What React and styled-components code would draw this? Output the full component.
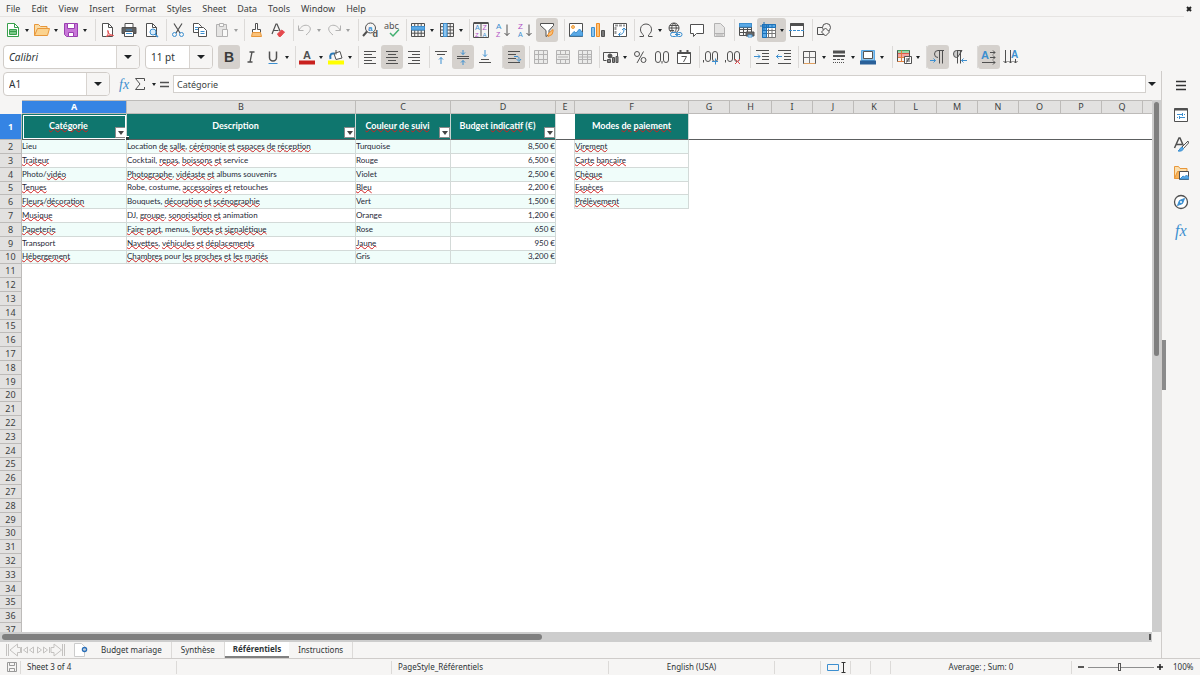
import React from "react";
import styled, { createGlobalStyle, css } from "styled-components";

const Global = createGlobalStyle`
  * { box-sizing: border-box; }
  html, body, #root { height: 100%; }
  body {
    margin: 0;
    background: #f6f5f4;
    color: #3c3f41;
    font: 9px/14px "Noto Sans", sans-serif;
  }
  button, input { font: inherit; color: inherit; padding: 0; margin: 0; border: 0; background: none; }
  svg { display: block; flex: none; overflow: visible; }
`;

const DARK = "#505050";
const BLUE = "#3c8fd0";
const LINE = "#dcdad8";

/* ---------- layout ---------- */

const Window = styled.div`
  height: 100vh;
  display: flex;
  flex-direction: column;
  overflow: hidden;
`;

const MenuBar = styled.header`
  display: flex;
  align-items: center;
  height: 17px;
  flex: none;
  padding-right: 6px;
`;

const Menus = styled.nav`
  flex: 1;
  display: flex;
  gap: 11px;
  height: 17px;
  padding-left: 6px;
  border-bottom: 1px solid #e6e4e2;
`;

const MenuButton = styled.button`
  height: 17px;
`;

const CloseButton = styled.button`
  width: 10px;
`;

const ToolBar = styled.div`
  display: flex;
  align-items: center;
  flex: none;
  height: ${(p) => p.$h}px;
  padding-left: ${(p) => p.$start}px;
`;

const ToolButton = styled.button`
  flex: none;
  display: flex;
  align-items: center;
  width: ${(p) => (p.$drop ? 29 : 22)}px;
  height: 24px;
  padding-left: 3px;
  border-radius: 3px;
  opacity: ${(p) => (p.$dim ? 0.4 : 1)};
  background: ${(p) => (p.$on ? "#d5d1cd" : "transparent")};
`;

const Separator = styled.span`
  flex: none;
  width: ${(p) => p.$w}px;
  height: 22px;
  border-right: 1px solid ${LINE};
`;

const Caret = styled.span`
  flex: none;
  width: 0;
  height: 0;
  border: 0 solid transparent;
  border-width: ${(p) => (p.$big ? "4px 4px 0" : "3px 2px 0")};
  border-top-color: #1e2224;
  margin-left: ${(p) => (p.$big ? 0 : 4)}px;
`;

const Combo = styled.div`
  flex: none;
  display: flex;
  width: ${(p) => p.$w}px;
  height: 24px;
  margin-right: 5px;
  border: 1px solid #d0ccc8;
  border-radius: 4px;
  background: #fff;
  overflow: hidden;
`;

const ComboInput = styled.input`
  flex: 1;
  min-width: 0;
  padding-left: 5px;
  font-size: 10px;
  font-style: ${(p) => (p.$italic ? "italic" : "normal")};
  color: #2e3436;
`;

const ComboButton = styled.button`
  width: 23px;
  display: flex;
  align-items: center;
  justify-content: center;
  border-left: 1px solid #d8d4d0;
  background: #f6f5f4;
`;

const Work = styled.div`
  flex: 1;
  min-height: 0;
  display: flex;
`;

const Main = styled.main`
  flex: 1;
  min-width: 0;
  display: flex;
  flex-direction: column;
`;

const FormulaBar = styled.div`
  flex: none;
  display: flex;
  align-items: center;
  height: 29px;
  padding: 0 3px 3px 3px;
`;

const FormulaTools = styled.div`
  display: flex;
  align-items: center;
  width: 58px;
  padding-left: 1px;
`;

const FormulaInput = styled.input`
  flex: 1;
  min-width: 0;
  height: 18px;
  padding-left: 3px;
  border: 1px solid #d3d0cd;
  background: #fff;
`;

const ExpandButton = styled.button`
  display: flex;
  justify-content: center;
  width: 12px;
`;

const SheetArea = styled.div`
  flex: 1;
  min-height: 0;
  display: flex;
`;

const SheetView = styled.div`
  flex: 1;
  min-width: 0;
  overflow: hidden;
  background: #fff;
`;

const VScroll = styled.div`
  flex: none;
  width: 9px;
  padding: 2px 2px 0 2px;
  background: #cdcdcd;
`;

const VThumb = styled.div`
  height: 48%;
  border-radius: 3px;
  background: #7f7f7f;
`;

const HScroll = styled.div`
  flex: none;
  display: flex;
  justify-content: space-between;
  height: 10px;
  margin-right: 9px;
  padding: 2px 1px 2px 2px;
  background: #cdcdcd;
`;

const HThumb = styled.div`
  width: 47%;
  border-radius: 3px;
  background: #7f7f7f;
`;

const HGrip = styled.div`
  width: 2px;
  background: #555;
`;

/* ---------- spreadsheet ---------- */

const Sheet = styled.table`
  table-layout: fixed;
  width: 1px;
  border-collapse: separate;
  border-spacing: 0;

  tbody tr { height: 14px; }
  tbody tr:nth-child(5n + 4) { height: 13px; }
`;

const headCell = css`
  padding: 0;
  border: 0 solid #bdbbb9;
  border-width: 0 1px 1px 0;
  font-weight: ${(p) => (p.$on ? 700 : 400)};
  color: ${(p) => (p.$on ? "#fff" : "#3c3f41")};
  background: ${(p) => (p.$on ? "#3584e4" : "#e2e1e0")};
`;

const Corner = styled.td`
  padding: 0;
  background: #f6f5f4;
`;

const ColHead = styled.th`
  ${headCell}
  height: 14px;
  border-top-width: 1px;
  font-size: 9px;
  line-height: 12px;
`;

const RowHead = styled.th`
  ${headCell}
  font-size: 9px;
  line-height: 12px;
`;

const TitleCell = styled.td`
  position: relative;
  height: 26px;
  padding: 0;
  font: 700 9px/23px Lato, sans-serif;
  text-align: center;
  color: #fff;
  background: ${(p) => (p.$filled ? "#0f766e" : "#fff")};
  border-right: ${(p) => (p.$filled ? "1px solid #c9d6d3" : "0")};
  border-bottom: 1px solid #5c5f60;
  outline: ${(p) => (p.$on ? "1px solid #fff" : "0")};
  outline-offset: -2px;
`;

const FillHandle = styled.span`
  position: absolute;
  z-index: 1;
  right: -3px;
  bottom: -1px;
  width: 4px;
  height: 4px;
  border: 1px solid #fff;
  border-width: 1px 0 0 1px;
  background: #2f3b3a;
`;

const Title = styled.div`
  display: flex;
  align-items: flex-start;
  height: 25px;
`;

const TitleText = styled.span`
  flex: 1;
  white-space: nowrap;
`;

const FilterButton = styled.button`
  align-self: flex-end;
  display: flex;
  align-items: center;
  justify-content: center;
  width: 11px;
  height: 11px;
  margin-bottom: 1px;
  border: 1px solid #8a8a8a;
  background: #fff;
`;

const FilterMark = styled.span`
  border: 3px solid transparent;
  border-top: 4px solid #444;
  border-bottom: 0;
`;

const Cell = styled.td`
  padding: 0 0 1px;
  overflow: hidden;
  white-space: nowrap;
  font: 8px/11px Lato, sans-serif;
  color: #1f2937;
  text-align: ${(p) => (p.$right ? "right" : "left")};
  background: ${(p) => (p.$tint ? "#f0fdfa" : "#fff")};
  border: 0 solid #d3dad8;
  border-width: ${(p) => (p.$boxed ? "0 1px 1px 0" : "0")};
  border-right: ${(p) => (p.$edge ? "1px solid #d3dad8" : "")};
`;

const Misspelt = styled.span`
  text-decoration: underline wavy #d02020 1px;
  text-decoration-skip-ink: none;
  text-underline-offset: -1px;
`;

/* ---------- sidebar, tabs, status ---------- */

const Splitter = styled.div`
  flex: none;
  display: flex;
  align-items: center;
  width: 5px;
  border-left: 1px solid #cfccca;
`;

const Grip = styled.div`
  width: 4px;
  height: 50px;
  background: #8b8b8b;
`;

const SideBar = styled.aside`
  flex: none;
  display: flex;
  flex-direction: column;
  align-items: center;
  width: 34px;
  padding: 6px 4px 0 0;
`;

const SideButton = styled.button`
  height: 17px;
  margin-bottom: 12px;
`;

const TabBar = styled.div`
  flex: none;
  display: flex;
  height: 16px;
  font-size: 8px;
`;

const TabNav = styled.div`
  display: flex;
  align-items: center;
  width: 70px;
  padding-left: 5px;
`;

const AddTab = styled.button`
  width: 22px;
  padding-left: 4px;
`;

const Tab = styled.button`
  padding: 0 9px;
  line-height: 14px;
  height: 16px;
  color: #2e3436;
  border-right: 1px solid ${LINE};
  ${(p) =>
    p.$on &&
    css`
      padding: 0 8px;
      font-weight: 700;
      background: #fff;
      border-right: 0;
      border-bottom: 2px solid #808080;
    `}
`;

const StatusBar = styled.footer`
  flex: none;
  display: grid;
  grid-template-columns: 21px 156fr 215fr 217fr 166fr 46px 30px 20px 20px 181fr 96px 32px;
  align-items: center;
  height: 17px;
  border-top: 1px solid #cfccca;
  font-size: 8px;
  color: #2e3436;
`;

const StatusCell = styled.div`
  display: flex;
  align-items: center;
  justify-content: ${(p) => (p.$center ? "center" : "flex-start")};
  height: 13px;
  padding: 0 6px;
  white-space: nowrap;
  border-right: 1px solid ${LINE};
`;

const ZoomCell = styled.div`
  display: flex;
  align-items: center;
  justify-content: space-between;
  padding: 0 4px 0 5px;
`;

const ZoomButton = styled.button`
  width: 8px;
  height: 12px;
`;

const ZoomSlider = styled.input`
  appearance: none;
  width: 66px;
  height: 1px;
  background: #8f8f8f;

  &::-webkit-slider-thumb {
    appearance: none;
    width: 3px;
    height: 8px;
    border: 1px solid #555;
    background: #f6f5f4;
  }
`;

const Percent = styled.span`
  padding-left: 5px;
`;

/* ---------- icons ---------- */

const Svg = ({ w = 16, h = 16, children }) => (
  <svg width={w} height={h} viewBox={`0 0 ${w} ${h}`} fill="none" stroke={DARK} strokeWidth="1" aria-hidden="true">
    {children}
  </svg>
);

const Glyph = ({ x, y, size = 9, fill = DARK, children, ...rest }) => (
  <text x={x} y={y} fontSize={size} fill={fill} stroke="none" fontFamily="Liberation Sans, sans-serif" {...rest}>
    {children}
  </text>
);

const page = "M3.5 1.5h6l4 4v9h-10z";
const gridLines = "M1.5 1.5h13v13h-13zM1.5 4.7h13M1.5 8h13M1.5 11.2h13M4.7 1.5v13M8 1.5v13M11.2 1.5v13";
const VIOLET = "#b04fc4";

const Merge = ({ extra }) => (
  <>
    <path d="M1.5 1.500h13v13h-13z" fill="#ddd" />
    <path d="M1.5 5.5h13M1.5 10.500h13M5.5 1.500v4M10.5 1.500v4M5.5 10.5v4M10.5 10.5v4" />
    <path d={extra} />
  </>
);

const icons = {
  newDoc: (
    <>
      <path d="M2.5 1.5h7l4 4v9h-11z" fill="#fff" stroke="#38a04c" />
      <path d="M9.5 1.5v4h4" stroke="#38a04c" />
      <path d="M4.500 7.500h7v5h-7z" stroke="#38a04c" fill="#7cc98a" />
      <path d="M4.500 9.500h7" stroke="#38a04c" />
    </>
  ),
  open: (
    <>
      <path d="M.500 13.500v-11h4l2 2h6.500v2.500" fill="#f9dca6" stroke="#e8973a" />
      <path d="M.500 13.500l3-7h12l-2 7z" fill="#fbd38f" stroke="#e8973a" />
    </>
  ),
  save: (
    <>
      <path d="M1.5 1.5h13v13h-11l-2-2z" fill="#c877d8" stroke="#9a3fb0" />
      <path d="M4.5 1.5h7v5h-7z" fill="#fff" stroke="#9a3fb0" />
      <path d="M5.5 10.5h5v4h-5z" fill="#fff" stroke="#9a3fb0" />
    </>
  ),
  pdf: (
    <>
      <path d={page} fill="#fff" />
      <path d="M9.5 1.5v4h4" />
      <path d="M7.500 14.500c2-2 2.500-5.500 1.500-6s-.5 4.500 5.500 5c-2-1-5 0-7 1" stroke="#e0484a" />
    </>
  ),
  print: (
    <>
      <path d="M4 1.500h8v4h-8z" fill="#fff" />
      <path d="M1 5.500h14v6H1z" fill="#606060" />
      <path d="M3.500 9.500h9v5h-9z" fill="#fff" />
      <path d="M5 11.500h6M5 8h6" stroke={BLUE} />
    </>
  ),
  preview: (
    <>
      <path d={page} fill="#fff" />
      <path d="M9.500 1.500v4h4" />
      <circle cx="10" cy="10" r="3" fill="#d9ecfa" stroke={BLUE} />
      <path d="M12 12l3 3" stroke={BLUE} strokeWidth="1.500" />
    </>
  ),
  cut: (
    <>
      <path d="M4 1.500l6 9.500M12 1.500L6 11" strokeWidth="1.200" />
      <circle cx="4.500" cy="12.500" r="2" stroke={BLUE} />
      <circle cx="11.500" cy="12.500" r="2" stroke={BLUE} />
    </>
  ),
  copy: (
    <>
      <path d="M1.500 1.500h5l3 3v6h-8z" fill="#fff" />
      <path d="M6.500 5.500h5l3 3v6h-8z" fill="#fff" />
      <path d="M3 5.500h3M3 7.500h3M8.500 9.500h4M8.500 11.500h4" stroke={BLUE} />
    </>
  ),
  paste: (
    <>
      <path d="M2.500 2.500h10v12h-10z" fill="#ccc" />
      <path d="M5.500 1.500h4v3h-4z" fill="#fff" />
      <path d="M8.500 7.500h5v7h-5z" fill="#fff" />
    </>
  ),
  clone: (
    <>
      <path d="M7.500 1.500h2v6h3v3h-8v-3h3z" fill="#fff" />
      <path d="M4.500 10.500h8l1 4h-10z" fill="#fbc27a" stroke="#e8973a" />
    </>
  ),
  clear: (
    <>
      <path d="M2 12l4-10h1l3 7M3.500 8.500h5" strokeWidth="1.200" />
      <path d="M7.500 12l4-4 3 2-4 4.500h-1.500z" fill="#e5494d" stroke="#e5494d" />
    </>
  ),
  undo: <path d="M1.500 3.500v5h5M2 8c2-3.500 5-5.500 8.500-4.500s4.500 5-1.500 9.500" />,
  redo: <path d="M14.500 3.500v5h-5M14 8c-2-3.500-5-5.500-8.500-4.500s-4.500 5 1.500 9.500" />,
  find: (
    <>
      <circle cx="8.500" cy="6" r="5" />
      <path d="M5 9.500L1 14" strokeWidth="2" />
      <Glyph x="6" y="8.500" size="8" fontWeight="700" fill={BLUE}>a</Glyph>
      <Glyph x="10.500" y="15" size="9" fontWeight="700">d</Glyph>
    </>
  ),
  spell: (
    <>
      <Glyph x="0" y="7" size="9" style={{ fontFamily: "Noto Sans, sans-serif" }}>abc</Glyph>
      <path d="M6 11l3 3 6-6.500" stroke="#43b071" strokeWidth="1.500" />
    </>
  ),
  row: (
    <>
      <path d={gridLines} />
      <path d="M1.500 4.500h13v3.500h-13z" fill="#5aa9e6" stroke={BLUE} />
    </>
  ),
  col: (
    <>
      <path d={gridLines} />
      <path d="M4.500 1.500h3.500v13h-3.500z" fill="#8cc4ee" stroke={BLUE} />
    </>
  ),
  sort: (
    <>
      <path d="M.500 1.500h15v14h-15zM8 1.500v13" />
      <path d="M.500 1h15" strokeWidth="2" />
      <Glyph x="2" y="8" size="7" fill={BLUE}>A</Glyph>
      <Glyph x="2" y="15" size="6" fill={VIOLET}>Z</Glyph>
      <Glyph x="9.500" y="8" size="7" fill={VIOLET}>Z</Glyph>
      <Glyph x="9.500" y="15" size="6" fill={BLUE}>A</Glyph>
    </>
  ),
  asc: (
    <>
      <Glyph x="1" y="6.500" size="8" fill={BLUE}>A</Glyph>
      <Glyph x="1" y="15" size="7" fill={VIOLET}>Z</Glyph>
      <path d="M12 2.500v11M9.500 11l2.500 2.500 2.500-2.500" />
    </>
  ),
  desc: (
    <>
      <Glyph x="1" y="6.500" size="8" fill={VIOLET}>Z</Glyph>
      <Glyph x="1" y="15" size="7" fill={BLUE}>A</Glyph>
      <path d="M12 2.500v11M9.500 11l2.500 2.500 2.500-2.500" />
    </>
  ),
  filter: (
    <>
      <path d="M1.500 1.500h13v2l-4.500 5v4l-3 2v-6l-5.500-5z" fill="#fff" />
      <path d="M14 7.500l-5 4.500v2.500l4-2 1-3z" fill="#fbc27a" stroke="#f08c24" />
    </>
  ),
  image: (
    <>
      <path d="M1.500 1.500h13v13h-13z" fill="#fff" />
      <circle cx="5" cy="5" r="1.500" fill="#fbc27a" stroke="#f0a040" />
      <path d="M2 14l4-4.500 2 1.500 3.500-4 3 3.500v3.500z" fill="#5aa9e6" stroke={BLUE} />
    </>
  ),
  chart: (
    <>
      <path d="M1.500 5.500h3v9h-3z" fill="#8cc4ee" stroke={BLUE} />
      <path d="M6.500 1.500h3v13h-3z" fill="#fbc27a" stroke="#f08c24" />
      <path d="M11.500 8.500h3v6h-3z" fill="#777" />
    </>
  ),
  pivot: (
    <>
      <path d="M1.500 1.500h13v13h-13z" fill="#fff" />
      <path d="M3 3.500h10M3.500 5v8" stroke="#999" strokeWidth="2" strokeDasharray="3 1" />
      <path d="M7 12.500c4 0 5-2 5-6M10 8l2-2 2 2M8.500 10.500l-2 2 2 2" stroke={BLUE} />
    </>
  ),
  omega: <path d="M1.500 14.500h4v-1.500c-5-3.500-3.500-11 2.500-11s7.500 7.500 2.500 11v1.500h4" />,
  link: (
    <>
      <circle cx="7" cy="6" r="5" />
      <path d="M2 6h10M7 1c-3 3-3 7 0 10M7 1c3 3 3 7 0 10M3 3.500h8M3 8.500h4" />
      <path d="M4.500 10.500h4a2 2 0 0 1 0 4h-3a2 2 0 0 1 0-4M11.500 14.500a2 2 0 0 1 0-4h1.500a2 2 0 0 1 0 4zM8 12.500h5" stroke={BLUE} fill="#f6f5f4" />
    </>
  ),
  comment: <path d="M1.500 2.500h13v9h-7l-3 3v-3h-3z" fill="#fff" />,
  header: <path d="M3.500 1.500h6l4 4v9h-10zM4 11.500h9M5 13h7" fill="#ccc" />,
  printRange: (
    <>
      <path d="M1.500 1.500h12v12h-12zM1.500 5.500h12M1.500 7.500h12M1.500 10.500h12M5.500 1.500v12M9.500 1.500v12" />
      <path d="M1.500 1.500h12v3.500h-12z" fill="#5aa9e6" stroke={BLUE} />
      <path d="M8 10h8v4h-8z" fill="#666" />
      <path d="M10 13h4v2h-4z" fill="#fff" stroke={BLUE} />
    </>
  ),
  freeze: (
    <>
      <path d="M2.500 2.500h13v13h-13z" fill="#fff" stroke="#777" />
      <path d="M6.500 8.500h9M6.500 11.500h9M8.500 6.500v9M12 6.500v9" stroke="#777" />
      <path d="M2.500 2.500h13v3h-13zM2.500 2.500h4v13h-4z" fill="#5aa9e6" stroke="#1c71b8" />
      <path d="M3 8.500h3M3 11.500h3M8.500 3v2M12 3v2" stroke="#1c71b8" />
      <path d="M4 0v8M0 4h8" stroke="#1c71b8" />
    </>
  ),
  split: (
    <>
      <path d="M1.500 1.500h13v13h-13z" fill="#fff" />
      <path d="M1.500 2.500h13" strokeWidth="3" />
      <path d="M0 8.500h16" stroke={BLUE} strokeDasharray="3 1" />
    </>
  ),
  shapes: (
    <>
      <path d="M1.500 5.500h7v7h-7z" />
      <circle cx="10.500" cy="5.500" r="4" fill="#f6f5f4" />
      <path d="M9.500 6l4 4-4 4-4-4z" fill="#f6f5f4" />
    </>
  ),
  bold: <Glyph x="3" y="13" size="14" fontWeight="700" fill="#3a3a3a">B</Glyph>,
  italic: <path d="M6.500 3h5M4.500 13h5M9 3L7 13" strokeWidth="1.300" />,
  underline: (
    <>
      <path d="M4.500 2.500v6a3.500 3.500 0 0 0 7 0v-6" strokeWidth="1.500" />
      <path d="M3.500 14.500h9" stroke={BLUE} />
    </>
  ),
  fontColor: (
    <>
      <Glyph x="4" y="10" size="11" fontWeight="700">A</Glyph>
      <path d="M0 13.500h16" stroke="#c9211e" strokeWidth="4" />
    </>
  ),
  fill: (
    <>
      <path d="M6 4.500l6-2 2 6.500-6 1.500z" fill="#fff" />
      <path d="M8 1v4.500" />
      <path d="M2.500 10c-1-5 1-6 4-5.500" stroke="#2b7ab8" strokeWidth="2" />
      <path d="M0 13.500h16" stroke="#ffff00" strokeWidth="4" />
    </>
  ),
  left: <path d="M2 2.500h12M2 5.500h8M2 8.500h12M2 11.500h8M2 14.500h12" />,
  center: <path d="M2 2.500h12M4 5.500h8M2 8.500h12M4 11.500h8M2 14.500h12" />,
  right: <path d="M2 2.500h12M6 5.500h8M2 8.500h12M6 11.500h8M2 14.500h12" />,
  top: (
    <>
      <path d="M2 2.500h12M4 5.500h8" />
      <path d="M8 15V8.500M6 10.500l2-2 2 2" stroke={BLUE} />
    </>
  ),
  middle: (
    <>
      <path d="M2 7.500h12M2 9.500h12" />
      <path d="M8 1v4.500M6 3.500l2 2 2-2M8 16v-4.500M6 13.500l2-2 2 2" stroke={BLUE} />
    </>
  ),
  bottom: (
    <>
      <path d="M4 10.500h8M2 13.500h12" />
      <path d="M8 1v6.500M6 5.500l2 2 2-2" stroke={BLUE} />
    </>
  ),
  wrap: (
    <>
      <path d="M2 2.500h12M2 5.500h8M2 9.500h8M2 13.500h12" />
      <path d="M8 7.500h3c2 0 2 1 2 4M10.500 10l2.500 2.500 2-2.500" stroke={BLUE} />
    </>
  ),
  merge1: <Merge extra="M5.500 5.500v5M10.500 5.500v5" />,
  merge2: <Merge extra="M3 8h10" />,
  merge3: <Merge extra="M5.500 5.500v8M10.500 5.500v8M1.500 8h13" />,
  currency: (
    <>
      <path d="M3.500 11.500h-3v-8h14v4" />
      <circle cx="7" cy="7" r="2" fill="#555" />
      <path d="M4.500 10.500h3v3h-3zM9.500 8.500h2v5h-2zM13 7.500h2v6h-2z" fill="#888" />
    </>
  ),
  percent: (
    <>
      <circle cx="5" cy="5" r="2.500" />
      <circle cx="11.500" cy="11" r="2.500" />
      <path d="M11.500 2.500l-6.500 11.500" />
    </>
  ),
  number: (
    <>
      <rect x="1.500" y="2.500" width="5" height="11" rx="2.500" />
      <path d="M8 12v2.500" />
      <rect x="9.500" y="2.500" width="5" height="11" rx="2.500" />
    </>
  ),
  date: (
    <>
      <path d="M1.500 3.500h13v11h-13z" fill="#fff" />
      <path d="M1.500 4h13M4.500 1v3M11.500 1v3" strokeWidth="2" />
      <path d="M5.500 7.500h5l-3 5.500" />
    </>
  ),
  addDec: (
    <>
      <path d="M.500 11v2.500" />
      <rect x="2.500" y="2.500" width="5" height="10" rx="2.500" />
      <rect x="9.500" y="2.500" width="5" height="10" rx="2.500" />
      <path d="M9 12.500h6M12.500 9.500v6" stroke={BLUE} />
    </>
  ),
  delDec: (
    <>
      <path d="M.500 11v2.500" />
      <rect x="2.500" y="2.500" width="5" height="10" rx="2.500" />
      <rect x="9.500" y="2.500" width="5" height="10" rx="2.500" />
      <path d="M10 10l5 5M15 10l-5 5" stroke="#e5494d" />
    </>
  ),
  indent: (
    <>
      <path d="M2 1.500h13M8 4.500h7M8 7.500h7M8 10.500h7M2 14.500h13" />
      <path d="M0 7.500h6M4 5.500l2 2-2 2" stroke={BLUE} />
    </>
  ),
  outdent: (
    <>
      <path d="M2 1.500h13M8 4.500h7M8 7.500h7M8 10.500h7M2 14.500h13" />
      <path d="M0 7.500h6M2.500 5.500l-2 2 2 2" stroke={BLUE} />
    </>
  ),
  borders: (
    <>
      <path d="M7.500 3v11M2 8.500h11" stroke="#777" />
      <path d="M1.500 2.500h12v12h-12z" stroke="#555" />
      <path d="M2 14.500h11" stroke="#e0a060" />
    </>
  ),
  lineStyle: (
    <>
      <path d="M2 3h12" strokeWidth="3" />
      <path d="M2 7h12" strokeWidth="2" />
      <path d="M2 10.500h12" strokeDasharray="3 1" />
      <path d="M2 13.500h12" strokeDasharray="1 1" />
    </>
  ),
  lineColor: (
    <>
      <path d="M1.500 1.500h13v10h-13z" fill="#8cc4ee" stroke="#5aa9e6" />
      <path d="M3.500 2.500h9v7h-9z" fill="#fff" stroke="#555" />
      <path d="M0 13.500h16" stroke="#2a6099" strokeWidth="4" />
    </>
  ),
  conditional: (
    <>
      <path d="M1.500 1.500h12v3h-12z" fill="#9fd6a8" stroke="#43a060" />
      <path d="M1.500 4.500h12v4h-12z" fill="#f4a5a0" stroke="#e0584a" />
      <path d="M1.500 8.500h7v4h-7zM5.500 1.500v11" stroke="#e08040" />
      <path d="M1.500 1.500v11M13.500 1.500v6" />
      <path d="M8.500 7.500h7v7h-7z" fill="#fff" />
      <path d="M10 10h4M10 12h4M13.500 8.500l-3 5" />
    </>
  ),
  ltr: (
    <>
      <path d="M14 1.500H8a3.500 3.500 0 0 0 0 7M9.500 1.500v13M12.500 1.500v13" />
      <path d="M0 11.500h5.500M3.500 9.500l2 2-2 2" stroke={BLUE} />
    </>
  ),
  rtl: (
    <>
      <path d="M10 1.500H4.500a3 3.500 0 0 0 0 7h1zM5.500 1.500v13M8.500 1.500v13" fill="#ccc" />
      <path d="M15 11.500H9.500M11.500 9.500l-2 2 2 2" stroke={BLUE} />
    </>
  ),
  horizontal: (
    <>
      <Glyph x="0" y="10" size="11" fontWeight="700" fill={BLUE}>A</Glyph>
      <path d="M9 3.500h5M12 1.500l2 2-2 2M9 8.500h5M12 6.500l2 2-2 2M1 13.500h13M12 11.500l2 2-2 2" />
    </>
  ),
  vertical: (
    <>
      <Glyph x="8" y="9" size="10" fontWeight="700" fill={BLUE}>A</Glyph>
      <path d="M2.500 1v13M.500 12l2 2 2-2M7.500 1v13M5.500 12l2 2 2-2M12.500 10v4M10.500 12l2 2 2-2" />
    </>
  ),
  fx: (
    <Glyph x="3" y="13" size="14" fill={BLUE} fontStyle="italic" style={{ fontFamily: "Liberation Serif, serif" }}>
      fx
    </Glyph>
  ),
  functions: (
    <Glyph x="2" y="13" size="16" fill={BLUE} fontStyle="italic" style={{ fontFamily: "Liberation Serif, serif" }}>
      fx
    </Glyph>
  ),
  sigma: <path d="M12.500 5V2.500h-9L8 8l-4.500 5.500h9V11" />,
  equals: <path d="M4 6.500h9M4 10.500h9" strokeWidth="1.500" />,
  menu: <path d="M3 3.500h10M3 7.500h10M3 11.500h10" stroke="#333" strokeWidth="1.500" />,
  properties: (
    <>
      <path d="M1.500 1.500h13v13h-13z" fill="#fff" />
      <path d="M1.500 2.500h13" strokeWidth="2" />
      <path d="M4 7.500h5M11 7.500h1M9.500 6v3M4 10.500h1M7 10.500h5M6.500 9v3" stroke={BLUE} />
    </>
  ),
  styles: (
    <>
      <path d="M1.500 12L6 2h1l3.500 8M3 8.500h6" strokeWidth="1.500" />
      <path d="M15 5l-6 6 1.500 1.500L15.500 7z" fill="#fff" />
      <path d="M9 11c-2 .5-2 3-4 4 3 .5 5-.5 5.500-2.500z" fill="#5aa9e6" stroke={BLUE} />
    </>
  ),
  gallery: (
    <>
      <path d="M1.500 13.500v-12h4l1.500 2h7v3" fill="#fbdfae" stroke="#e8973a" />
      <path d="M1.500 13.500h5v-7h-2z" fill="#f9b35a" stroke="#e8973a" />
      <path d="M6.500 6.500h9v8h-9z" fill="#fff" />
      <path d="M7 14l3-3 1.500 1 2-2 2 2v2z" fill="#5aa9e6" stroke={BLUE} />
    </>
  ),
  navigator: (
    <>
      <circle cx="8" cy="8" r="6.500" fill="#fff" strokeWidth="1.300" />
      <path d="M11.500 4.500L9.500 9.500l-5 2 2-5z" fill={BLUE} stroke={BLUE} />
      <circle cx="8" cy="8" r="1" fill="#fff" stroke="none" />
    </>
  ),
};

const Icon = ({ name }) => <Svg>{icons[name]}</Svg>;

/* ---------- data ---------- */

const menus = ["File", "Edit", "View", "Insert", "Format", "Styles", "Sheet", "Data", "Tools", "Window", "Help"];

// A number is a separator of that width.
const standardTools = [
  ["newDoc", "drop"], ["open", "drop"], ["save", "drop"], 7,
  ["pdf"], ["print"], ["preview"], 5,
  ["cut"], ["copy"], ["paste", "drop", "dim"], 5,
  ["clone"], ["clear"], 5,
  ["undo", "drop", "dim"], ["redo", "drop", "dim"], 7,
  ["find"], ["spell"], 4,
  ["row", "drop"], ["col", "drop"], 5,
  ["sort"], ["asc"], ["desc"], ["filter", "on"], 7,
  ["image"], ["chart"], ["pivot"], 4,
  ["omega", "drop"], ["link"], ["comment"], ["header", "dim"], 5,
  ["printRange"], ["freeze", "drop", "on"], ["split"], 5,
  ["shapes"],
];

const formatTools = [
  ["bold", "on"], ["italic"], ["underline", "drop"], 5,
  ["fontColor", "drop"], ["fill", "drop"], 5,
  ["left"], ["center", "on"], ["right"], 5,
  ["top"], ["middle", "on"], ["bottom"], 7,
  ["wrap", "on"], 5,
  ["merge1", "dim"], ["merge2", "dim"], ["merge3", "dim"], 4,
  ["currency", "drop"], ["percent"], ["number"], ["date"], 5,
  ["addDec"], ["delDec"], 7,
  ["indent"], ["outdent"], 4,
  ["borders", "drop"], ["lineStyle", "drop"], ["lineColor", "drop"], 7,
  ["conditional", "drop"], 5,
  ["ltr", "on"], ["rtl"], 7,
  ["horizontal", "on"], ["vertical"],
];

const columns = [
  ["A", 105], ["B", 229], ["C", 95], ["D", 105], ["E", 19], ["F", 114],
  ["G", 41], ["H", 42], ["I", 41], ["J", 41], ["K", 41], ["L", 42], ["M", 41],
  ["N", 41], ["O", 42], ["P", 41], ["Q", 41], ["R", 41],
];

// Words in square brackets carry the spelling mark.
const titles = ["[Catégorie]", "Description", "[Couleur] [de] [suivi]", "Budget [indicatif] (€)", "", "Modes [de] [paiement]"];

const records = [
  ["Lieu", "Location [de] [salle], [cérémonie] [et] [espaces] [de] [réception]", "Turquoise", "8,500 €", "", "[Virement]"],
  ["[Traiteur]", "Cocktail, [repas], [boissons] [et] service", "Rouge", "6,500 €", "", "[Carte] [bancaire]"],
  ["Photo/[vidéo]", "[Photographe], [vidéaste] [et] albums souvenirs", "Violet", "2,500 €", "", "[Chèque]"],
  ["[Tenues]", "Robe, costume, [accessoires] [et] retouches", "[Bleu]", "2,200 €", "", "[Espèces]"],
  ["[Fleurs]/[décoration]", "Bouquets, [décoration] [et] [scénographie]", "Vert", "1,500 €", "", "[Prélèvement]"],
  ["[Musique]", "DJ, [groupe], [sonorisation] [et] animation", "Orange", "1,200 €"],
  ["[Papeterie]", "[Faire]-[part], menus, [livrets] [et] [signalétique]", "Rose", "650 €"],
  ["Transport", "[Navettes], [véhicules] [et] [déplacements]", "[Jaune]", "950 €"],
  ["[Hébergement]", "[Chambres] pour [les] [proches] [et] [les] [mariés]", "Gris", "3,200 €"],
];

const rowNumbers = Array.from({ length: 36 }, (_, i) => i + 2);

const Spelled = ({ text }) =>
  text
    .split(/(\[[^\]]+\])/)
    .filter(Boolean)
    .map((part, i) => (part[0] === "[" ? <Misspelt key={i}>{part.slice(1, -1)}</Misspelt> : part));

/* ---------- parts ---------- */

const Tools = ({ items }) =>
  items.map((item, i) => {
    if (typeof item === "number") return <Separator key={i} $w={item} />;
    const [name, ...flags] = item;
    const drop = flags.includes("drop");
    return (
      <ToolButton key={i} aria-label={name} $drop={drop} $on={flags.includes("on")} $dim={flags.includes("dim")}>
        <Icon name={name} />
        {drop && <Caret />}
      </ToolButton>
    );
  });

const ComboBox = ({ label, value, width, italic }) => (
  <Combo $w={width}>
    <ComboInput aria-label={label} defaultValue={value} $italic={italic} />
    <ComboButton aria-label={`${label} list`}>
      <Caret $big />
    </ComboButton>
  </Combo>
);

const Grid = () => (
  <Sheet>
    <colgroup>
      <col style={{ width: 22 }} />
      {columns.map(([name, width]) => (
        <col key={name} style={{ width }} />
      ))}
    </colgroup>
    <thead>
      <tr>
        <Corner />
        {columns.map(([name]) => (
          <ColHead key={name} scope="col" $on={name === "A"}>{name}</ColHead>
        ))}
      </tr>
      <tr>
        <RowHead scope="row" $on>1</RowHead>
        {columns.map(([name], c) => (
          <TitleCell key={name} $filled={Boolean(titles[c])} $on={c === 0}>
            {titles[c] && (
              <Title>
                <TitleText><Spelled text={titles[c]} /></TitleText>
                {c < 4 && (
                  <FilterButton aria-label={`Filter ${name}`}>
                    <FilterMark />
                  </FilterButton>
                )}
              </Title>
            )}
            {c === 0 && <FillHandle />}
          </TitleCell>
        ))}
      </tr>
    </thead>
    <tbody>
      {rowNumbers.map((n, r) => (
        <tr key={n}>
          <RowHead scope="row">{n}</RowHead>
          {columns.map(([name], c) => {
            const text = records[r]?.[c];
            return (
              <Cell key={name} $boxed={Boolean(text)} $edge={c === 4 && r < 5} $tint={Boolean(text) && r % 2 === 0} $right={c === 3}>
                {text && <Spelled text={text} />}
              </Cell>
            );
          })}
        </tr>
      ))}
    </tbody>
  </Sheet>
);

export default function App() {
  return (
    <Window>
      <Global />
      <MenuBar>
        <Menus>
          {menus.map((m) => (
            <MenuButton key={m}>{m}</MenuButton>
          ))}
        </Menus>
        <CloseButton aria-label="Close">
          <Svg w={10} h={10}>
            <path d="M3 3l4 4M7 3l-4 4" stroke="#222" strokeWidth="2" />
          </Svg>
        </CloseButton>
      </MenuBar>
      <ToolBar $start={2} $h={26}>
        <Tools items={standardTools} />
      </ToolBar>
      <ToolBar $start={3} $h={28}>
        <ComboBox label="Font name" value="Calibri" width={137} italic />
        <ComboBox label="Font size" value="11 pt" width={68} />
        <Tools items={formatTools} />
      </ToolBar>
      <Work>
        <Main>
          <FormulaBar>
            <ComboBox label="Name box" value="A1" width={107} />
            <FormulaTools>
              <Icon name="fx" />
              <Icon name="sigma" />
              <Caret />
              <Icon name="equals" />
            </FormulaTools>
            <FormulaInput aria-label="Formula" defaultValue="Catégorie" />
            <ExpandButton aria-label="Expand formula bar">
              <Caret $big />
            </ExpandButton>
          </FormulaBar>
          <SheetArea>
            <SheetView>
              <Grid />
            </SheetView>
            <VScroll>
              <VThumb />
            </VScroll>
          </SheetArea>
          <HScroll>
            <HThumb />
            <HGrip />
          </HScroll>
          <TabBar>
            <TabNav>
              <Svg w={61} h={14}>
                <g stroke="#c4c2c0">
                  <path d="M1.500 1v12M3.500 1v12M12.500 1L5 7l7.500 6V9.500h3v-5h-3z" />
                  <path d="M22.500 4l-4 3 4 3zM28.500 4l-4 3 4 3zM16.500 4v6" />
                  <path d="M32.500 4l4 3-4 3zM38.500 4l4 3-4 3zM44.500 4v6" />
                  <path d="M49 1l7.500 6L49 13V9.500h-3v-5h3zM57.500 1v12M59.500 1v12" />
                </g>
              </Svg>
            </TabNav>
            <AddTab aria-label="Add sheet">
              <Svg w={16} h={16}>
                <path d="M.500 1.500h7l3 3v10h-10z" fill="#fff" stroke="#ccc" />
                <circle cx="10.500" cy="7.500" r="2" stroke="#2a6fb8" strokeWidth="1.500" />
              </Svg>
            </AddTab>
            <Tab>Budget mariage</Tab>
            <Tab>Synthèse</Tab>
            <Tab $on>Référentiels</Tab>
            <Tab>Instructions</Tab>
          </TabBar>
        </Main>
        <Splitter>
          <Grip />
        </Splitter>
        <SideBar>
          {["menu", "properties", "styles", "gallery", "navigator", "functions"].map((name) => (
            <SideButton key={name} aria-label={name}>
              <Icon name={name} />
            </SideButton>
          ))}
        </SideBar>
      </Work>
      <StatusBar>
        <StatusCell>
          <Svg w={12} h={12}>
            <path d="M1.500 1.500h9v9h-9zM3.500 1.500v3h5v-3M3.500 10.500v-3h5v3" stroke="#999" />
          </Svg>
        </StatusCell>
        <StatusCell>Sheet 3 of 4</StatusCell>
        <StatusCell />
        <StatusCell>PageStyle_Référentiels</StatusCell>
        <StatusCell $center>English (USA)</StatusCell>
        <StatusCell />
        <StatusCell>
          <Svg w={18} h={12}>
            <path d="M.500 3.500h11v6h-11z" stroke={BLUE} />
            <path d="M14.500 1.500h4M14.500 11.500h4M16.500 1.500v10" stroke="#333" />
          </Svg>
        </StatusCell>
        <StatusCell />
        <StatusCell />
        <StatusCell $center>Average: ; Sum: 0</StatusCell>
        <ZoomCell>
          <ZoomButton aria-label="Zoom out">
            <Svg w={8} h={12}>
              <path d="M1 6h6" stroke="#222" strokeWidth="1.500" />
            </Svg>
          </ZoomButton>
          <ZoomSlider type="range" aria-label="Zoom" min="20" max="180" defaultValue="98" />
          <ZoomButton aria-label="Zoom in">
            <Svg w={8} h={12}>
              <path d="M1 6h6M4 3v6" stroke="#222" strokeWidth="1.500" />
            </Svg>
          </ZoomButton>
        </ZoomCell>
        <Percent>100%</Percent>
      </StatusBar>
    </Window>
  );
}
